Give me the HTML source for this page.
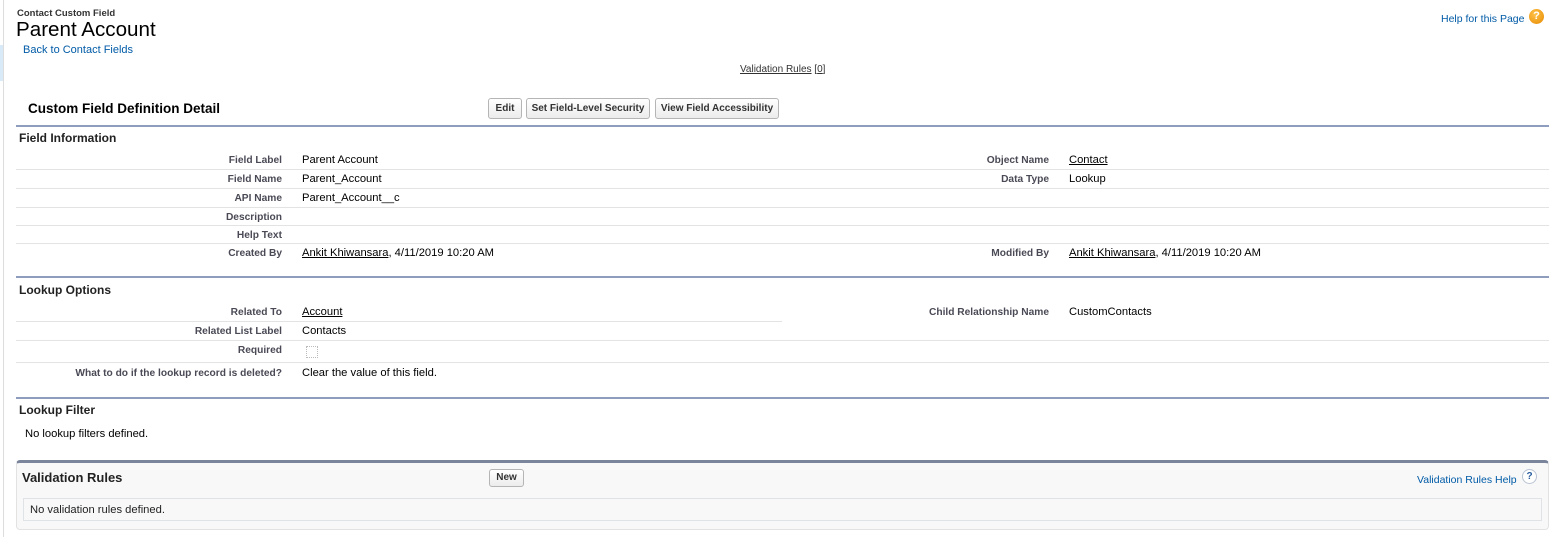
<!DOCTYPE html>
<html><head><style>
body{margin:0;width:1551px;height:537px;background:#fff;font-family:"Liberation Sans",Arial,sans-serif;color:#333;position:relative;overflow:hidden}
.a{position:absolute;white-space:nowrap}
.lbl{position:absolute;font-size:10.2px;font-weight:bold;color:#4a4a56;text-align:right;white-space:nowrap}
.val{position:absolute;font-size:11.2px;color:#000;white-space:nowrap}
.sep{position:absolute;height:1px;background:#e3e3e3}
.blue{position:absolute;left:16px;width:1533px;height:2px;background:#8e9dbe}
.btn{position:absolute;height:19px;border:1px solid #b5b5b5;border-radius:3px;background:linear-gradient(#fff,#ececec);font-size:10px;font-weight:bold;color:#333;line-height:19px;text-align:center}
u{text-decoration:underline}
.sec{position:absolute;font-size:12px;font-weight:bold;color:#222}
</style></head><body>
<div class="a" style="left:3px;top:0;width:1px;height:537px;background:#ddd"></div>
<div class="a" style="left:0;top:45px;width:3px;height:36px;background:#d8eaf8"></div>
<div class="a" style="left:17px;top:8px;font-size:9.5px;font-weight:bold;color:#333">Contact Custom Field</div>
<div class="a" style="left:16px;top:18px;font-size:20.6px;color:#000">Parent Account</div>
<div class="a" style="left:23px;top:44px;font-size:11px;color:#015ba7">Back to Contact Fields</div>
<div class="a" style="left:1441px;top:13px;font-size:10.5px;color:#015ba7">Help for this Page</div>
<div class="a" style="left:1529px;top:9px;width:15px;height:15px;border-radius:50%;background:radial-gradient(circle at 40% 35%,#ffc24a,#e68a00);color:#fff;font-size:11px;font-weight:bold;text-align:center;line-height:15px">?</div>
<div class="a" style="left:740px;top:64px;font-size:10px;color:#333"><u>Validation Rules</u> [<u>0</u>]</div>

<div class="a" style="left:28px;top:101px;font-size:13.5px;font-weight:bold;color:#000">Custom Field Definition Detail</div>
<div class="btn" style="left:488px;top:98px;width:32px">Edit</div>
<div class="btn" style="left:526px;top:98px;width:122px">Set Field-Level Security</div>
<div class="btn" style="left:655px;top:98px;width:122px">View Field Accessibility</div>
<div class="blue" style="top:125px"></div>
<div class="sec" style="left:19px;top:131px">Field Information</div>

<div class="lbl" style="right:1269px;top:155px">Field Label</div><div class="val" style="left:302px;top:154px">Parent Account</div>
<div class="lbl" style="right:502px;top:155px">Object Name</div><div class="val" style="left:1069px;top:154px"><u>Contact</u></div>
<div class="sep" style="left:16px;width:1533px;top:169px"></div>
<div class="lbl" style="right:1269px;top:174px">Field Name</div><div class="val" style="left:302px;top:173px">Parent_Account</div>
<div class="lbl" style="right:502px;top:174px">Data Type</div><div class="val" style="left:1069px;top:173px">Lookup</div>
<div class="sep" style="left:16px;width:1533px;top:188px"></div>
<div class="lbl" style="right:1269px;top:193px">API Name</div><div class="val" style="left:302px;top:192px">Parent_Account__c</div>
<div class="sep" style="left:16px;width:1533px;top:207px"></div>
<div class="lbl" style="right:1269px;top:212px">Description</div>
<div class="sep" style="left:16px;width:1533px;top:225px"></div>
<div class="lbl" style="right:1269px;top:230px">Help Text</div>
<div class="sep" style="left:16px;width:1533px;top:243px"></div>
<div class="lbl" style="right:1269px;top:248px">Created By</div><div class="val" style="left:302px;top:247px"><u>Ankit Khiwansara</u>, 4/11/2019 10:20 AM</div>
<div class="lbl" style="right:502px;top:248px">Modified By</div><div class="val" style="left:1069px;top:247px"><u>Ankit Khiwansara</u>, 4/11/2019 10:20 AM</div>

<div class="blue" style="top:276px"></div>
<div class="sec" style="left:19px;top:283px">Lookup Options</div>
<div class="lbl" style="right:1269px;top:307px">Related To</div><div class="val" style="left:302px;top:306px"><u>Account</u></div>
<div class="lbl" style="right:502px;top:307px">Child Relationship Name</div><div class="val" style="left:1069px;top:306px">CustomContacts</div>
<div class="sep" style="left:16px;width:766px;top:321px"></div>
<div class="lbl" style="right:1269px;top:326px">Related List Label</div><div class="val" style="left:302px;top:325px">Contacts</div>
<div class="sep" style="left:16px;width:1533px;top:340px"></div>
<div class="lbl" style="right:1269px;top:345px">Required</div>
<div class="a" style="left:306px;top:346px;width:10px;height:10px;border:1px dotted #bbb"></div>
<div class="sep" style="left:16px;width:1533px;top:362px"></div>
<div class="lbl" style="right:1269px;top:368px">What to do if the lookup record is deleted?</div><div class="val" style="left:302px;top:367px">Clear the value of this field.</div>

<div class="blue" style="top:397px"></div>
<div class="sec" style="left:19px;top:403px">Lookup Filter</div>
<div class="val" style="left:25px;top:428px">No lookup filters defined.</div>

<div class="a" style="left:16px;top:460px;width:1531px;height:66px;background:#f8f8f8;border:1px solid #e2e2e2;border-top:3px solid #7a859c;border-radius:4px"></div>
<div class="a" style="left:22px;top:470px;font-size:13px;font-weight:bold;color:#222">Validation Rules</div>
<div class="btn" style="left:489px;top:469px;width:33px;height:16px;line-height:16px">New</div>
<div class="a" style="left:1417px;top:474px;font-size:10.5px;color:#015ba7">Validation Rules Help</div>
<div class="a" style="left:1522px;top:469px;width:13px;height:13px;border-radius:50%;border:1px solid #b9c3d3;background:#fff;color:#2a5d9f;font-size:10px;font-weight:bold;text-align:center;line-height:13px">?</div>
<div class="a" style="left:23px;top:498px;width:1517px;height:21px;background:#f8f8f8;border:1px solid #e0e3e5"></div>
<div class="val" style="left:30px;top:504px;color:#222">No validation rules defined.</div>
</body></html>
